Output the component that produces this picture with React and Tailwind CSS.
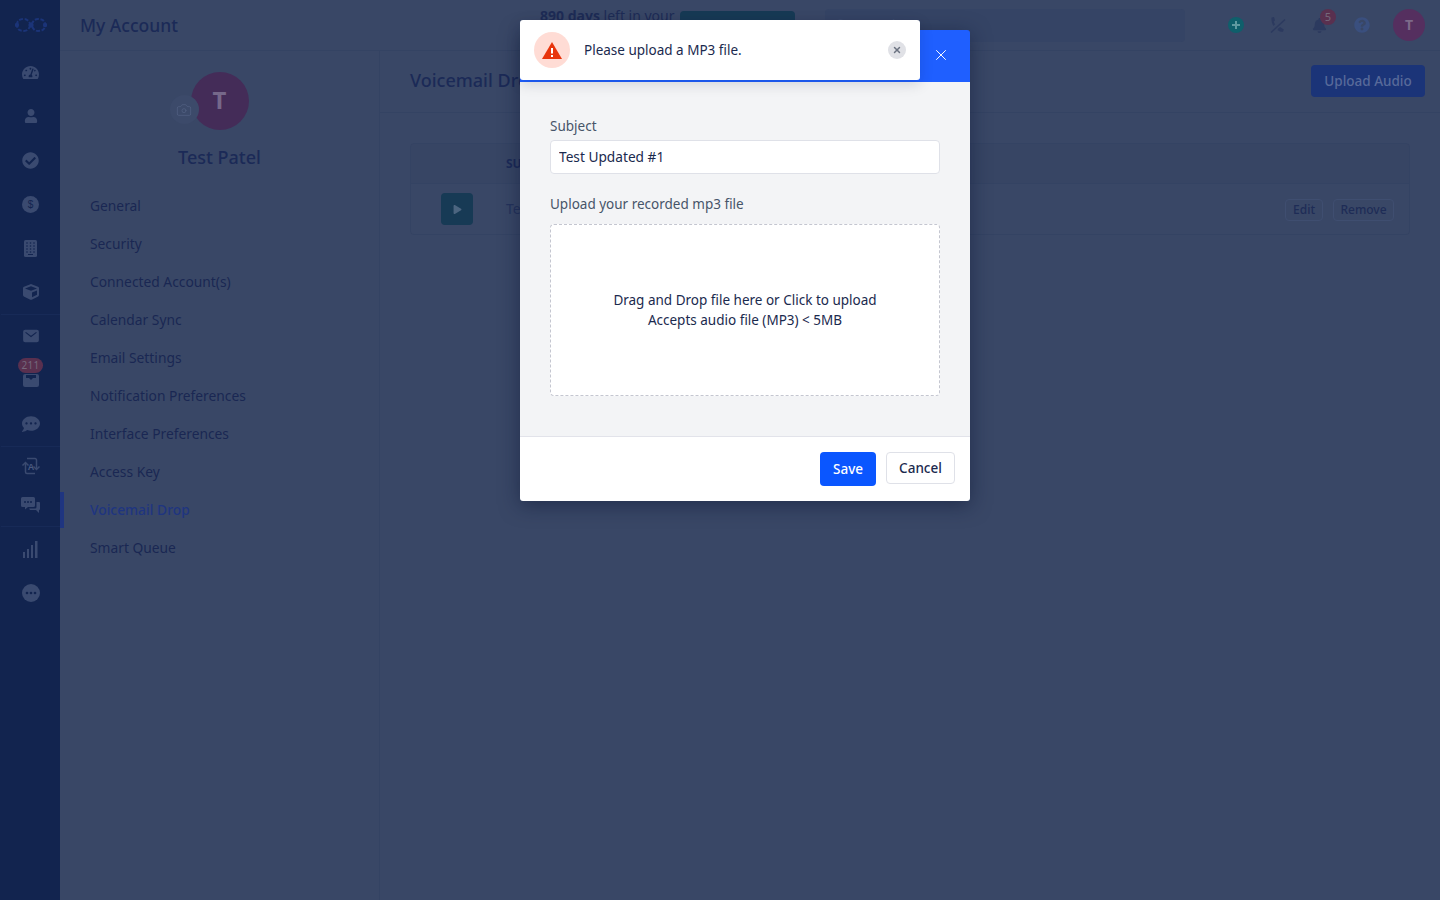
import React from "react";
import { Camera, X, Search } from "lucide-react";
import { FaTachometerAlt, FaUser, FaCheckCircle, FaCube, FaCommentDots, FaBell, FaQuestionCircle, FaPlay } from "react-icons/fa";
import { IoMail } from "react-icons/io5";

const menuItems = [
  "General",
  "Security",
  "Connected Account(s)",
  "Calendar Sync",
  "Email Settings",
  "Notification Preferences",
  "Interface Preferences",
  "Access Key",
  "Voicemail Drop",
  "Smart Queue",
];

function Logo() {
  return (
    <svg width="32" height="16" viewBox="0 0 32 16" fill="none">
      <path d="M2 8C2 4 4 2 9 2C13 2 14 5 16 8C18 11 19 14 23 14C28 14 30 12 30 8C30 4 28 2 23 2C19 2 18 5 16 8C14 11 13 14 9 14C4 14 2 12 2 8Z" stroke="#1b3478" strokeWidth="2" strokeDasharray="4 1.6" />
      <circle cx="2" cy="8" r="2.2" fill="#1b3478" />
      <circle cx="16" cy="8" r="2.6" fill="#1b3478" />
      <circle cx="30" cy="8" r="2.2" fill="#1b3478" />
    </svg>
  );
}

function DollarIcon() {
  return (
    <svg width="17" height="17" viewBox="0 0 17 17">
      <circle cx="8.5" cy="8.5" r="8.5" fill="#3a4a70" />
      <text x="8.5" y="12" textAnchor="middle" fontSize="10" fill="#12244f" fontFamily="Liberation Sans, sans-serif">$</text>
    </svg>
  );
}

function KeypadIcon() {
  return (
    <svg width="13" height="17" viewBox="0 0 13 17">
      <rect width="13" height="17" rx="1.5" fill="#3a4a70" />
      {[3, 6.5, 10].map((x) =>
        [3, 6, 9, 12].map((y) => <circle key={`${x}-${y}`} cx={x} cy={y} r="0.8" fill="#12244f" />)
      )}
      <rect x="4" y="14" width="5" height="1" fill="#12244f" />
    </svg>
  );
}

function InboxIcon() {
  return (
    <svg width="16" height="13" viewBox="0 0 16 13">
      <path d="M0 2a2 2 0 0 1 2-2h12a2 2 0 0 1 2 2v9a2 2 0 0 1-2 2H2a2 2 0 0 1-2-2Z" fill="#3a4a70" />
      <path d="M3 1h10v3h-3l-2 2-2-2H3Z" fill="#12244f" />
    </svg>
  );
}

function TranslateIcon() {
  return (
    <svg width="20" height="20" viewBox="0 0 20 20" fill="none" stroke="#3a4a70" strokeWidth="1.5">
      <path d="M6 2.5h8a1.500 1.500 0 0 1 1.500 1.500v9M14 17.500H6A1.500 1.500 0 0 1 4.500 16V7" />
      <path d="M1.500 9.500l3-3 3 3M12.500 10.500l3 3 3-3" />
      <text x="10" y="13.500" textAnchor="middle" fontSize="9" fontWeight="700" fill="#4a5a80" stroke="none" fontFamily="Liberation Sans, sans-serif">A</text>
    </svg>
  );
}

function ChatsIcon() {
  return (
    <svg width="19" height="16" viewBox="0 0 19 16">
      <path d="M1.500 0h11A1.500 1.500 0 0 1 14 1.500v7A1.500 1.500 0 0 1 12.500 10H7l-3 2.500V10H1.500A1.500 1.500 0 0 1 0 8.500v-7A1.500 1.500 0 0 1 1.500 0Z" fill="#3a4a70" />
      <circle cx="4" cy="5" r="1" fill="#12244f" />
      <circle cx="7" cy="5" r="1" fill="#12244f" />
      <circle cx="10" cy="5" r="1" fill="#12244f" />
      <path d="M15.500 5H18a1 1 0 0 1 1 1v6a1 1 0 0 1-1 1v3l-3-3H9l-1-1.500h6a1.500 1.500 0 0 0 1.500-1.500Z" fill="#3a4a70" />
    </svg>
  );
}

function BarsIcon() {
  return (
    <svg width="15" height="17" viewBox="0 0 15 17" fill="#3a4a70">
      <rect x="0" y="11" width="2" height="6" />
      <rect x="4" y="8" width="2" height="9" />
      <rect x="8" y="4" width="2" height="13" />
      <rect x="12" y="0" width="2.500" height="17" />
    </svg>
  );
}

function DotsIcon() {
  return (
    <svg width="18" height="18" viewBox="0 0 18 18">
      <circle cx="9" cy="9" r="9" fill="#3a4a70" />
      <circle cx="5" cy="9" r="1.300" fill="#12244f" />
      <circle cx="9" cy="9" r="1.300" fill="#12244f" />
      <circle cx="13" cy="9" r="1.300" fill="#12244f" />
    </svg>
  );
}

function PhoneSlashIcon() {
  return (
    <svg width="16" height="16" viewBox="0 0 16 16" fill="#2c3a5f">
      <path d="M1.500 0.500 4 0l1 3.500-1.300 1c.3 1 .8 1.900 1.400 2.700L3.500 9C2 6.800 1.200 3.500 1.500 0.500Z" />
      <path d="M8.500 11.200l1.500-1.200 3.800 2.500-.8 2.300c-1.800.3-3.600-.3-5.500-1.800Z" />
      <path d="M1 15.500 15 2.500" stroke="#2c3a5f" strokeWidth="1.500" />
    </svg>
  );
}

function PlusIcon() {
  return (
    <svg width="16" height="16" viewBox="0 0 16 16">
      <circle cx="8" cy="8" r="8" fill="#0f5f6b" />
      <path d="M8 4v8M4 8h8" stroke="#5f9aa0" strokeWidth="2" />
    </svg>
  );
}

function Sidebar() {
  return (
    <aside className="w-[60px] shrink-0 bg-[#12244f] flex flex-col items-center pl-px text-[#3a4a70]">
      <div className="h-[50px] w-full flex items-center justify-center">
        <Logo />
      </div>
      <div className="h-[44px] flex items-center justify-center"><FaTachometerAlt size={17} /></div>
      <div className="h-[44px] flex items-center justify-center"><FaUser size={14} /></div>
      <div className="h-[44px] flex items-center justify-center"><FaCheckCircle size={17} /></div>
      <div className="h-[44px] flex items-center justify-center"><DollarIcon /></div>
      <div className="h-[44px] flex items-center justify-center"><KeypadIcon /></div>
      <div className="h-[44px] flex items-center justify-center"><FaCube size={16} /></div>
      <div className="h-[44px] w-full border-t border-[#172a57] pb-px flex items-center justify-center"><IoMail size={18} /></div>
      <div className="h-[44px] relative flex items-center justify-center">
        <InboxIcon />
        <span className="absolute top-0 left-1/2 -translate-x-1/2 rounded-full bg-[#59304f] text-[#75687c] text-[10px] leading-[15px] px-[4px] tracking-wide">211</span>
      </div>
      <div className="h-[44px] flex items-center justify-center"><FaCommentDots size={18} /></div>
      <div className="h-[38px] w-full border-t border-[#172a57] flex items-center justify-center"><TranslateIcon /></div>
      <div className="h-[42px] flex items-center justify-center"><ChatsIcon /></div>
      <div className="h-[46px] w-full border-t border-[#172a57] flex items-center justify-center"><BarsIcon /></div>
      <div className="h-[40px] pt-[2px] flex items-center justify-center"><DotsIcon /></div>
    </aside>
  );
}

function Header() {
  return (
    <header className="h-[51px] shrink-0 border-b border-[#344363] flex items-center pl-5 pr-[15px]">
      <h1 className="text-[17.500px] font-medium text-[#1b2a57] w-[460px]">My Account</h1>
      <p className="self-start mt-[6px] text-sm text-[#1e2c56] w-[140px] whitespace-nowrap"><b>890 days</b> left in your</p>
      <div className="self-start mt-[11px] w-[115px] h-[28px] rounded bg-[#173a55]" />
      <div className="ml-[30px] w-[360px] h-[33px] bg-[#354465] rounded flex items-center pl-[9px] gap-2 text-[#3f4e70] text-sm">
        <Search size={14} />
        <span>Search</span>
      </div>
      <div className="ml-auto flex items-center">
        <PlusIcon />
        <div className="ml-[26px]"><PhoneSlashIcon /></div>
        <div className="relative ml-[26px]">
          <FaBell size={15} className="text-[#2c3a5f]" />
          <span className="absolute -top-[9px] -right-[9px] w-4 h-4 rounded-full bg-[#59304f] text-[#75687c] text-[11px] leading-4 text-center">5</span>
        </div>
        <FaQuestionCircle size={16} className="ml-[27px] text-[#3a4f7e]" />
        <div className="ml-[23px] w-8 h-8 rounded-full bg-[#552f5f] text-[#7d6a8a] text-sm font-bold flex items-center justify-center">T</div>
      </div>
    </header>
  );
}

function AccountMenu() {
  return (
    <nav className="w-[320px] shrink-0 border-r border-[#344363]">
      <div className="flex flex-col items-center pt-[21px]">
        <div className="relative w-[58px] h-[58px] rounded-full bg-[#442c58] text-[#76688a] text-[24px] font-bold flex items-center justify-center pb-[2px]">
          T
          <div className="absolute left-[-21px] top-[23px] w-[29px] h-[29px] rounded-full bg-[#3c4a6a] flex items-center justify-center">
            <Camera size={16} strokeWidth={1} className="text-[#556385]" />
          </div>
        </div>
        <h2 className="mt-[15px] text-[18px] font-medium text-[#1b2a57] leading-[24px]">Test Patel</h2>
      </div>
      <ul className="mt-[18px]">
        {menuItems.map((item) => (
          <li
            key={item}
            className={
              item === "Voicemail Drop"
                ? "relative h-[38px] pl-[30px] flex items-center text-[13.800px] font-medium text-[#1f3580]"
                : "h-[38px] pl-[30px] flex items-center text-[13.800px] text-[#1a2753]"
            }
          >
            {item === "Voicemail Drop" && <span className="absolute left-0 top-px w-1 h-9 bg-[#1f3580]" />}
            {item}
          </li>
        ))}
      </ul>
    </nav>
  );
}

function VoicemailContent() {
  return (
    <section className="flex-1">
      <div className="h-[62px] border-b border-[#344363] flex items-center justify-between pl-[30px] pr-[15px] pb-[2px]">
        <h2 className="text-[18px] font-medium text-[#1b2a57]">Voicemail Drop</h2>
        <button className="h-8 w-[114px] pt-[2px] rounded bg-[#1b3478] text-[#586a9a] text-[13.500px] font-medium">Upload Audio</button>
      </div>
      <div className="mt-[30px] ml-[30px] mr-[30px] border border-[#344363] rounded overflow-hidden">
        <div className="h-[40px] flex items-center pl-[95px] bg-[#374564] text-xs font-bold text-[#1b2a57] border-b border-[#344363]">SUBJECT</div>
        <div className="h-[50px] bg-[#394766] flex items-center pl-[30px] pr-[15px]">
          <div className="w-8 h-8 rounded bg-[#173a55] flex items-center justify-center">
            <FaPlay size={9} className="text-[#4c6580]" />
          </div>
          <span className="ml-[33px] text-sm text-[#24325b]">Test Updated #1</span>
          <button className="ml-auto mt-px h-[22px] w-[38px] pt-px border border-[#3f4e70] rounded text-xs font-medium text-[#1e2c56]">Edit</button>
          <button className="ml-[10px] mt-px h-[22px] w-[61px] pt-px border border-[#3f4e70] rounded text-xs font-medium text-[#1e2c56]">Remove</button>
        </div>
      </div>
    </section>
  );
}

function UploadModal() {
  return (
    <div className="absolute left-[520px] top-[30px] w-[450px] rounded-[3px] overflow-hidden shadow-[0_4px_20px_rgba(10,20,50,0.5)]">
      <div className="h-[52px] bg-[#1f5fff] flex items-center justify-end pr-5 pb-[2px]">
        <X size={18} strokeWidth={1.300} className="text-white" />
      </div>
      <div className="h-[355px] bg-[#f3f4f6] px-[30px] pt-[34px] border-b border-[#e2e3ea]">
        <label className="block text-[13.500px] leading-5 text-[#475569]">Subject</label>
        <input
          readOnly
          value="Test Updated #1"
          className="mt-[4px] w-full h-[34px] px-2 pb-[2px] bg-white border border-[#dfe1e8] rounded text-[13.700px] text-[#1b2a4e] outline-none"
        />
        <label className="block mt-5 text-[13.500px] leading-5 text-[#475569]">Upload your recorded mp3 file</label>
        <div className="mt-[10px] h-[172px] bg-white border border-dashed border-[#c4c6d0] rounded flex flex-col items-center justify-center text-[13.500px] leading-5 text-[#1b2a4e]">
          <p>Drag and Drop file here or Click to upload</p>
          <p>Accepts audio file (MP3) &lt; 5MB</p>
        </div>
      </div>
      <div className="h-[64px] bg-white flex items-start justify-end gap-[10px] pt-[15px] pr-[15px]">
        <button className="h-[34px] w-[56px] rounded bg-[#0a56ff] text-white text-[13.500px] font-medium">Save</button>
        <button className="h-8 w-[69px] rounded border border-[#dfe1e8] bg-white text-[#1b2a4e] text-[13.500px] font-medium">Cancel</button>
      </div>
    </div>
  );
}

function Toast() {
  return (
    <div className="absolute left-[520px] top-[20px] w-[400px] h-[60px] bg-white rounded-[3px] flex items-center pl-[14px] pr-[14px] shadow-[0_4px_14px_rgba(10,20,50,0.15)]">
      <div className="w-9 h-9 rounded-full bg-[#ffdcd5] flex items-center justify-center">
        <svg width="20" height="17" viewBox="0 0 20 17">
          <path d="M10 0 20 17H0Z" fill="#e8340c" />
          <rect x="9" y="6" width="2" height="5.500" fill="#fff" />
          <rect x="9" y="13" width="2" height="2" fill="#fff" />
        </svg>
      </div>
      <p className="ml-[14px] text-[13.500px] text-[#1b2a4e]">Please upload a MP3 file.</p>
      <div className="ml-auto w-[18px] h-[18px] rounded-full bg-[#e0e1e6] flex items-center justify-center">
        <X size={10} strokeWidth={3.500} className="text-[#6b7280]" />
      </div>
    </div>
  );
}

export default function App() {
  return (
    <div className="relative w-full h-[900px] overflow-hidden flex bg-[#394766] font-['Noto_Sans',sans-serif]">
      <Sidebar />
      <main className="flex-1 flex flex-col min-w-0">
        <Header />
        <div className="flex flex-1">
          <AccountMenu />
          <VoicemailContent />
        </div>
      </main>
      <UploadModal />
      <Toast />
    </div>
  );
}
